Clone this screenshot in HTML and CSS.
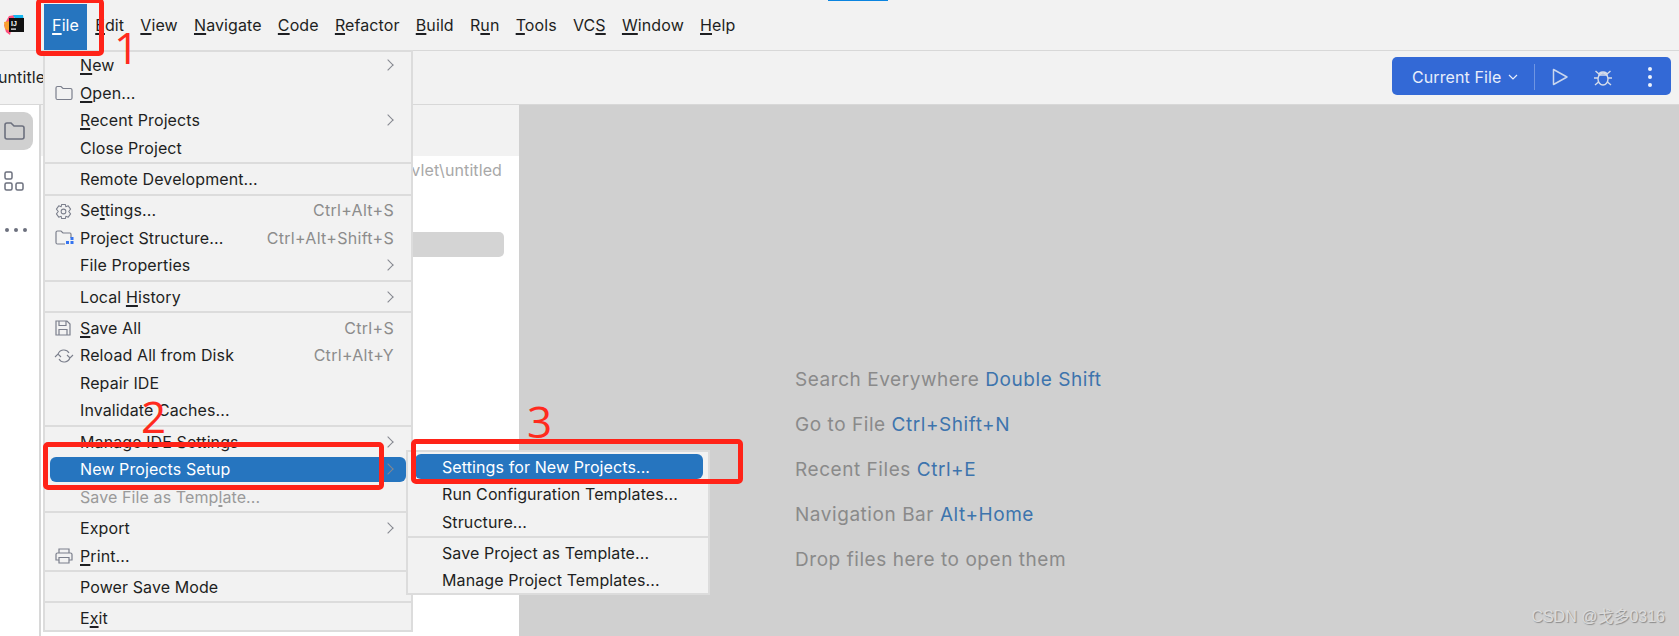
FILE: index.html
```html
<!DOCTYPE html>
<html lang="zh">
<head>
    <meta charset="UTF-8">
    <title>New Projects Setup</title>
    <link rel="stylesheet" href="styles.css">
</head>
<body>
    <div class="tab-strip"><span class="tab-mark"></span></div>

    <div class="menubar">
        <svg class="app-logo" viewBox="0 0 20 20" width="20" height="20">
            <path d="M0 10 L5 1 L11 0 L9 8 L6 20 L2 17 Z" fill="#ff4f7e"/>
            <path d="M9 0 L19 0 L20 8 L14 9 Z" fill="#17b6f0"/>
            <path d="M0 7 L6 6 L6 16 L1 14 Z" fill="#f9a12e"/>
            <rect x="5" y="3" width="15" height="14" fill="#111"/>
            <rect x="7" y="13.500" width="5" height="1.200" fill="#fff"/>
            <text x="7" y="11" class="logo-text">IJ</text>
        </svg>
        <div class="menu-title active"><u>F</u>ile</div>
        <div class="menu-title"><u>E</u>dit</div>
        <div class="menu-title"><u>V</u>iew</div>
        <div class="menu-title"><u>N</u>avigate</div>
        <div class="menu-title"><u>C</u>ode</div>
        <div class="menu-title"><u>R</u>efactor</div>
        <div class="menu-title"><u>B</u>uild</div>
        <div class="menu-title">R<u>u</u>n</div>
        <div class="menu-title"><u>T</u>ools</div>
        <div class="menu-title">VC<u>S</u></div>
        <div class="menu-title"><u>W</u>indow</div>
        <div class="menu-title"><u>H</u>elp</div>
    </div>

    <div class="toolbar">
        <div class="project-name">untitled</div>
        <div class="run-widget">
            <span class="run-config">Current File</span>
            <svg class="chevron" viewBox="0 0 10 6" width="10" height="6"><path d="M1 1 L5 5 L9 1" fill="none" stroke="#e8eefb" stroke-width="1.2"/></svg>
            <span class="run-divider"></span>
            <svg class="run-icon" viewBox="0 0 18 18" width="18" height="18"><path d="M2.500 1.500 L16 9 L2.500 16.500 Z" fill="none" stroke="#c9d6ee" stroke-width="1.500" stroke-linejoin="round"/></svg>
            <svg class="bug-icon" viewBox="0 0 20 20" width="20" height="20">
                <g fill="none" stroke="#d5dcea" stroke-width="1.400">
                    <ellipse cx="10" cy="12" rx="5" ry="6"/>
                    <path d="M6 8 C6 4 14 4 14 8 Z"/>
                    <path d="M5 11 H1 M15 11 H19 M5.500 15 L2 18 M14.500 15 L18 18 M6 7 L2.500 4 M14 7 L17.500 4"/>
                </g>
            </svg>
            <span class="kebab"><i></i><i></i><i></i></span>
        </div>
    </div>

    <div class="main">
        <div class="side-strip">
            <div class="strip-btn active">
                <svg viewBox="0 0 22 20" width="22" height="20"><path d="M2 4 Q2 2 4 2 H8 L11 5 H19 Q21 5 21 7 V16 Q21 18 19 18 H4 Q2 18 2 16 Z" fill="none" stroke="#6c707e" stroke-width="1.600"/></svg>
            </div>
            <div class="strip-btn">
                <svg viewBox="0 0 22 22" width="22" height="22">
                    <g fill="none" stroke="#6c707e" stroke-width="1.500">
                        <rect x="2" y="1" width="7" height="7" rx="1.500"/>
                        <rect x="2" y="12" width="7" height="7" rx="1.500"/>
                        <rect x="13" y="12" width="7" height="7" rx="1.500"/>
                    </g>
                </svg>
            </div>
            <div class="strip-dots"><i></i><i></i><i></i></div>
        </div>

        <div class="project-panel">
            <div class="panel-head"></div>
            <div class="recent-path">vlet\untitled</div>
            <div class="recent-selected"></div>
        </div>

        <div class="editor">
            <div class="hint">Search Everywhere <span class="keys">Double Shift</span></div>
            <div class="hint">Go to File <span class="keys">Ctrl+Shift+N</span></div>
            <div class="hint">Recent Files <span class="keys">Ctrl+E</span></div>
            <div class="hint">Navigation Bar <span class="keys">Alt+Home</span></div>
            <div class="hint">Drop files here to open them</div>
        </div>
    </div>

    <!-- File menu -->
    <div class="popup file-menu">
        <div class="item"><span><u>N</u>ew</span><span class="arrow"></span></div>
        <div class="item">
            <svg class="item-icon" viewBox="0 0 18 16" width="18" height="16"><path d="M1 3 Q1 1.500 2.500 1.500 H6 L8 3.500 H15.500 Q17 3.500 17 5 V13 Q17 14.500 15.500 14.500 H2.500 Q1 14.500 1 13 Z" fill="none" stroke="#7b7f8c" stroke-width="1.200"/></svg>
            <span><u>O</u>pen...</span>
        </div>
        <div class="item"><span><u>R</u>ecent Projects</span><span class="arrow"></span></div>
        <div class="item"><span>Close Pro<u>j</u>ect</span></div>
        <div class="sep"></div>
        <div class="item"><span>Remote Development...</span></div>
        <div class="sep"></div>
        <div class="item">
            <svg class="item-icon" viewBox="0 0 18 18" width="17" height="17">
                <path d="M7 1.500 H11 L11.500 4 L14 3 L16.500 6.500 L14.500 9 L16.500 11.500 L14 15 L11.500 14 L11 16.500 H7 L6.500 14 L4 15 L1.500 11.500 L3.500 9 L1.500 6.500 L4 3 L6.500 4 Z" fill="none" stroke="#7b7f8c" stroke-width="1.100" stroke-linejoin="round"/>
                <circle cx="9" cy="9" r="2.500" fill="none" stroke="#7b7f8c" stroke-width="1.100"/>
            </svg>
            <span>Se<u>t</u>tings...</span><span class="shortcut">Ctrl+Alt+S</span>
        </div>
        <div class="item">
            <svg class="item-icon" viewBox="0 0 19 16" width="19" height="16">
                <path d="M10 14 H2.500 Q1 14 1 12.500 V2.500 Q1 1 2.500 1 H6 L8 3 H15 Q16 3 16 4.500 V8" fill="none" stroke="#7b7f8c" stroke-width="1.200"/>
                <rect x="11" y="11" width="3" height="3" fill="#3574f0"/>
                <rect x="15.500" y="11" width="3" height="3" fill="#3574f0"/>
                <rect x="15.500" y="7" width="3" height="3" fill="#3574f0"/>
            </svg>
            <span>Project Structure...</span><span class="shortcut">Ctrl+Alt+Shift+S</span>
        </div>
        <div class="item"><span>File Properties</span><span class="arrow"></span></div>
        <div class="sep"></div>
        <div class="item"><span>Local <u>H</u>istory</span><span class="arrow"></span></div>
        <div class="sep"></div>
        <div class="item">
            <svg class="item-icon" viewBox="0 0 16 16" width="16" height="16">
                <path d="M1 1 H12 L15 4 V15 H1 Z M4 1 V5.500 H11 V1 M4 15 V9.500 H12 V15" fill="none" stroke="#7b7f8c" stroke-width="1.200"/>
            </svg>
            <span><u>S</u>ave All</span><span class="shortcut">Ctrl+S</span>
        </div>
        <div class="item">
            <svg class="item-icon wide" viewBox="0 0 20 16" width="20" height="16">
                <path d="M1 9 L4 6 L7 9 M4 6.500 A6 6 0 0 1 15 5 M19 7 L16 10 L13 7 M16 9.500 A6 6 0 0 1 5 11" fill="none" stroke="#7b7f8c" stroke-width="1.100"/>
            </svg>
            <span>Reload All from Disk</span><span class="shortcut">Ctrl+Alt+Y</span>
        </div>
        <div class="item"><span>Repair IDE</span></div>
        <div class="item"><span>Invalidate Caches...</span></div>
        <div class="sep"></div>
        <div class="item"><span>Manage IDE Settings</span><span class="arrow"></span></div>
        <div class="item selected"><span>New Projects Setup</span><span class="arrow"></span></div>
        <div class="item disabled"><span>Save File as Temp<u>l</u>ate...</span></div>
        <div class="sep"></div>
        <div class="item"><span>Export</span><span class="arrow"></span></div>
        <div class="item">
            <svg class="item-icon" viewBox="0 0 18 16" width="18" height="16">
                <path d="M4 5 V1 H14 V5 M4 12 H1 V6.500 Q1 5 2.500 5 H15.500 Q17 5 17 6.500 V12 H14 M4 9.500 H14 V15 H4 Z" fill="none" stroke="#7b7f8c" stroke-width="1.200"/>
            </svg>
            <span><u>P</u>rint...</span>
        </div>
        <div class="sep"></div>
        <div class="item"><span>Power Save Mode</span></div>
        <div class="sep"></div>
        <div class="item"><span>E<u>x</u>it</span></div>
    </div>

    <!-- New Projects Setup submenu -->
    <div class="popup sub-menu">
        <div class="item selected"><span>Settings for New Projects...</span></div>
        <div class="item"><span>Run Configuration Templates...</span></div>
        <div class="item"><span>Structure...</span></div>
        <div class="sep"></div>
        <div class="item"><span>Save Project as Template...</span></div>
        <div class="item"><span>Manage Project Templates...</span></div>
    </div>

    <!-- annotations drawn on the screenshot -->
    <div class="mark mark-file"></div>
    <div class="mark mark-setup"></div>
    <div class="mark mark-settings"></div>
    <div class="num num-1">1</div>
    <div class="num num-2">2</div>
    <div class="num num-3">3</div>

    <div class="watermark">CSDN @戈多0316</div>
</body>
</html>
```

FILE: styles.css
```css
body {
    font-family: 'Inter', 'Liberation Sans', sans-serif;
    margin: 0;
    width: 1679px;
    height: 636px;
    overflow: hidden;
    position: relative;
    display: flex;
    flex-direction: column;
    background-color: #f2f2f2;
    color: #1e1f22;
    font-size: 16px;
    letter-spacing: 0.1px;
}

u {
    text-decoration-thickness: 2px;
    text-underline-offset: 2px;
}

.tab-strip {
    height: 1px;
    padding-left: 828px;
    display: flex;
    flex: none;
}

.tab-mark {
    width: 60px;
    height: 1px;
    background-color: #0a84e0;
}

/* menu bar */
.menubar {
    height: 49px;
    flex: none;
    display: flex;
    align-items: stretch;
    border-bottom: 1px solid #d8d8d8;
}

.app-logo {
    margin: 14px 4px 0 4px;
    flex: none;
}

.logo-text {
    font-family: 'Liberation Sans', sans-serif;
    font-size: 7px;
    font-weight: bold;
    fill: #fff;
}

.menu-title {
    padding: 0 8.1px;
    line-height: 49px;
}

.menu-title.active {
    background-color: #2675bf;
    color: #ffffff;
    margin-left: 16px;
    margin-top: 3px;
    line-height: 43px;
}

/* toolbar */
.toolbar {
    height: 53px;
    flex: none;
    display: flex;
    align-items: center;
    justify-content: space-between;
    padding-right: 8px;
    border-bottom: 1px solid #d8d8d8;
}

.project-name {
    margin-left: -2px;
    margin-top: -1px;
}

.run-widget {
    width: 279px;
    height: 38px;
    margin-top: -3px;
    background-color: #3369d6;
    border-radius: 5px;
    color: #e8eefb;
    display: flex;
    align-items: center;
    padding: 2px 0 0 20px;
    box-sizing: border-box;
}

.chevron {
    margin-left: 7px;
}

.run-divider {
    width: 1px;
    height: 26px;
    background-color: #6f95e2;
    margin-left: 16px;
    margin-right: 16px;
}

.bug-icon {
    margin-left: 24px;
}

.kebab {
    display: flex;
    flex-direction: column;
    gap: 4px;
    margin-left: 35px;
}

.kebab i {
    width: 4px;
    height: 4px;
    border-radius: 50%;
    background-color: #eef2fb;
}

/* main area */
.main {
    flex: 1;
    display: flex;
    min-height: 0;
}

.side-strip {
    width: 39px;
    flex: none;
    background-color: #ffffff;
    border-right: 2px solid #d8d8d8;
    padding-top: 7px;
    display: flex;
    flex-direction: column;
    align-items: flex-start;
}

.strip-btn {
    width: 33px;
    height: 38px;
    display: flex;
    align-items: center;
    padding-left: 3px;
    box-sizing: border-box;
    margin-bottom: 13px;
}

.strip-btn.active {
    background-color: #d0d0d0;
    border-radius: 0 9px 9px 0;
}

.strip-dots {
    display: flex;
    gap: 5px;
    padding: 14px 0 0 5px;
}

.strip-dots i {
    width: 4px;
    height: 4px;
    border-radius: 50%;
    background-color: #6c707e;
}

.project-panel {
    width: 478px;
    flex: none;
    background-color: #ffffff;
    display: flex;
    flex-direction: column;
}

.panel-head {
    height: 51px;
    background-color: #f2f2f2;
}

.recent-path {
    text-align: right;
    padding-right: 17px;
    margin-top: 4px;
    line-height: 20px;
    color: #a8a8a8;
}

.recent-selected {
    height: 25px;
    margin: 52px 15px 0 300px;
    background-color: #d4d4d4;
    border-radius: 5px;
}

.editor {
    flex: 1;
    background-color: #d0d0d0;
    padding: 264px 0 0 276px;
    font-size: 19px;
    letter-spacing: 0.55px;
    color: #8a8a8a;
}

.hint {
    height: 45px;
    line-height: 22px;
}

.keys {
    color: #3d74ad;
}

/* popups */
.popup {
    position: absolute;
    background-color: #f2f2f2;
    border: 2px solid #dcdcdc;
    box-sizing: border-box;
}

.file-menu {
    left: 43px;
    top: 49.5px;
    width: 370px;
    height: 582.5px;
}

.sub-menu {
    left: 406px;
    top: 450px;
    width: 304px;
    height: 145px;
    padding-top: 1px;
}

.item {
    height: 27.5px;
    display: flex;
    align-items: center;
    padding: 0 17px 0 35px;
    position: relative;
    white-space: nowrap;
}

.sub-menu .item {
    padding-left: 34px;
}

.item-icon {
    position: absolute;
    left: 10px;
    top: 6px;
}

.item-icon.wide {
    left: 9px;
}

.shortcut {
    margin-left: auto;
    color: #8c8c8c;
    letter-spacing: 0.3px;
}

.arrow {
    margin-left: auto;
    width: 7px;
    height: 7px;
    border-top: 1.2px solid #85878f;
    border-right: 1.2px solid #85878f;
    transform: rotate(45deg);
    margin-right: 2px;
}

.sep {
    height: 3.8px;
    display: flex;
    align-items: center;
}

.sep::before {
    content: "";
    width: 100%;
    height: 2px;
    background-color: #dcdcdc;
}

.selected {
    color: #ffffff;
    background-color: #2675bf;
    border-radius: 6px;
    margin: 1.25px 5px;
    padding: 0 12px 0 30px;
    height: 25px;
}

.sub-menu .selected {
    padding-left: 27px;
    margin-left: 7px;
    margin-top: 1px;
}

.disabled {
    color: #9a9a9a;
}

/* red marks */
.mark {
    position: absolute;
    border: 5px solid #ff2318;
    border-radius: 5px;
    box-sizing: border-box;
}

.mark-file {
    left: 36px;
    top: -2px;
    width: 68px;
    height: 58px;
}

.mark-setup {
    left: 43px;
    top: 442px;
    width: 341px;
    height: 48px;
}

.mark-settings {
    left: 411px;
    top: 439px;
    width: 332px;
    height: 45px;
}

.num {
    position: absolute;
    font-family: 'Open Sans', 'Liberation Sans', sans-serif;
    font-weight: 400;
    font-size: 44px;
    line-height: 44px;
    color: #ff2a1e;
}

.num-1 {
    left: 114px;
    top: 25px;
}

.num-2 {
    left: 141px;
    top: 394px;
}

.num-3 {
    left: 527px;
    top: 399px;
}

.watermark {
    position: absolute;
    right: 14px;
    bottom: 9px;
    font-family: 'Liberation Sans', 'Noto Sans CJK SC', sans-serif;
    font-size: 16px;
    letter-spacing: 0;
    color: #dcdcdc;
    text-shadow: 1px 1px 1px #8a8a8a;
}
```
